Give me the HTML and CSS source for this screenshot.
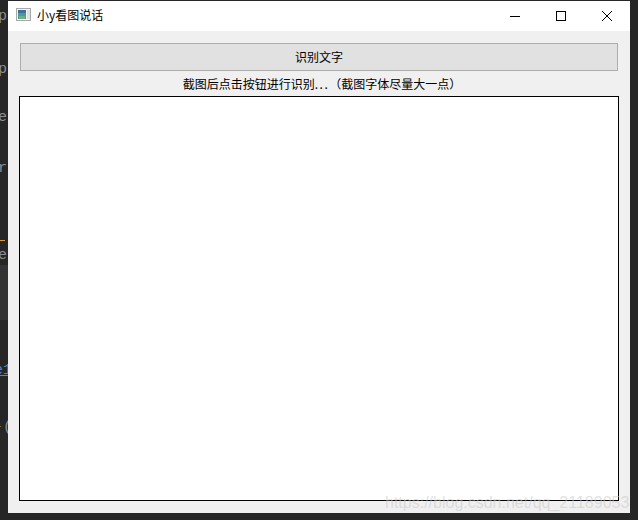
FILE: index.html
```html
<!DOCTYPE html>
<html lang="zh">
<head>
<meta charset="utf-8">
<title>小y看图说话</title>
<link rel="stylesheet" href="styles.css">
</head>
<body>
<div class="editor-bg" aria-hidden="true">
  <span class="code c1">p</span>
  <span class="code c2">p</span>
  <span class="code c3">e</span>
  <span class="code c4">r</span>
  <span class="mark"></span>
  <span class="code c5">e</span>
  <span class="band"></span>
  <span class="code link c6">e1</span>
  <span class="code c7">-(</span>
</div>
<main class="window">
  <header class="titlebar">
    <svg class="app-icon" width="16" height="14" viewBox="0 0 16 14">
      <rect x="0.5" y="0.5" width="14" height="12" fill="#f4f4f4" stroke="#a9a9a9"/>
      <rect x="2" y="2" width="8" height="9" fill="#4f9a96"/>
      <rect x="2" y="2" width="8" height="3" fill="#3f6f9f"/>
      <rect x="3" y="8" width="6" height="3" fill="#6fb184"/>
      <rect x="11" y="2" width="3" height="9" fill="#d9e4e4"/>
    </svg>
    <span class="title">小y看图说话</span>
    <div class="controls">
      <svg class="ctl" width="46" height="30" viewBox="0 0 46 30"><path d="M18 15.5h10" stroke="#000" fill="none"/></svg>
      <svg class="ctl" width="46" height="30" viewBox="0 0 46 30"><rect x="18.5" y="10.5" width="9" height="9" stroke="#000" fill="none"/></svg>
      <svg class="ctl" width="46" height="30" viewBox="0 0 46 30"><path d="M18 10l10 10M28 10l-10 10" stroke="#000" fill="none"/></svg>
    </div>
  </header>
  <section class="content">
    <button class="action" type="button"><span class="action-label">识别文字</span></button>
    <p class="hint">截图后点击按钮进行识别<span class="dots">...</span>（截图字体尽量大一点）</p>
    <div class="output"></div>
  </section>
</main>
<span class="watermark">https://blog.csdn.net/qq_21189053</span>
</body>
</html>
```
FILE: styles.css
```css
* { box-sizing: border-box; }
html, body { margin: 0; height: 100%; }
body {
  width: 638px;
  height: 520px;
  overflow: hidden;
  position: relative;
  background: #262626;
  padding: 1px 8px 7px;
  font-family: "Noto Sans CJK SC", "Liberation Sans", sans-serif;
  font-size: 12px;
  color: #000;
}
.editor-bg { position: absolute; inset: 0; }
.code {
  position: absolute;
  left: -2px;
  font-family: "Liberation Mono", monospace;
  font-size: 15px;
  line-height: 16px;
  color: #8a8f94;
}
.c1 { top: 9px; }
.c2 { top: 62px; }
.c3 { top: 110px; }
.c4 { top: 161px; }
.c5 { top: 248px; }
.c6 { top: 363px; left: -6px; }
.c7 { top: 420px; left: -6px; }
.link { color: #4f86c6; text-decoration: underline; }
.mark { position: absolute; left: 0; top: 240px; width: 5px; height: 1px; background: #d89a3a; }
.band { position: absolute; left: 0; top: 265px; width: 8px; height: 55px; background: #333; }
.window {
  position: relative;
  height: 512px;
  display: flex;
  flex-direction: column;
  background: #f0f0f0;
}
.titlebar {
  height: 30px;
  flex: none;
  display: flex;
  align-items: center;
  padding-left: 8px;
  background: #fff;
}
.app-icon { flex: none; margin: -2px 5px 0 0; }
.title { line-height: 28px; height: 30px; }
.controls { margin-left: auto; display: flex; }
.ctl { display: block; }
.content {
  flex: 1;
  display: flex;
  flex-direction: column;
  padding: 12px 11px 12px;
}
.action {
  height: 28px;
  margin: 0 1px;
  flex: none;
  border: 1px solid #adadad;
  background: #e1e1e1;
  font: inherit;
  color: #000;
  padding: 0 0 2px;
}
.hint {
  margin: 0;
  height: 25px;
  flex: none;
  padding-left: 6px;
  line-height: 26px;
  text-align: center;
}
.dots { letter-spacing: 1.5px; }
.output {
  flex: 1;
  background: #fff;
  border: 1px solid #000;
}
.watermark {
  position: absolute;
  left: 385px;
  top: 494px;
  font-family: "Liberation Sans", sans-serif;
  font-size: 16px;
  line-height: 18px;
  color: rgba(200, 200, 200, 0.55);
  white-space: nowrap;
}
```
